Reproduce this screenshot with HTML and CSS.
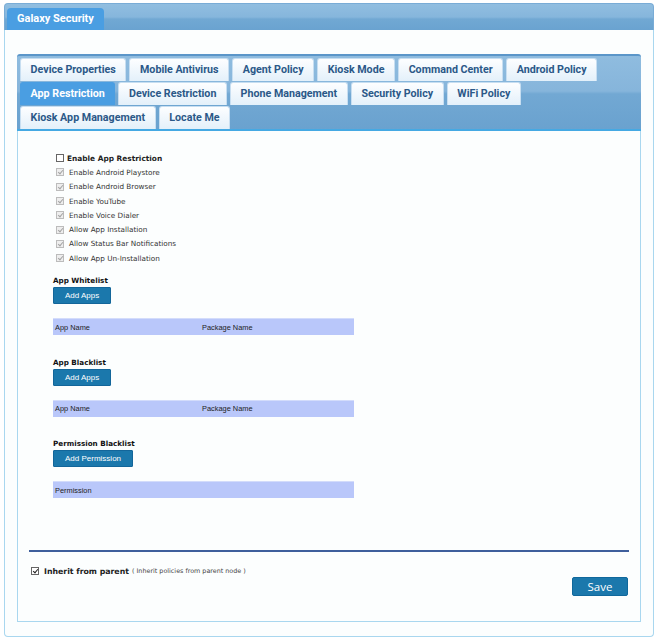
FILE: index.html
```html
<!DOCTYPE html>
<html lang="en">
  <head>
    <meta charset="UTF-8" />
    <meta name="viewport" content="width=device-width, initial-scale=1.0" />
    <link rel="stylesheet" href="styles.css">
    <title>Galaxy Security</title>
  </head>
  <body>
    <div class="window">
      <div class="window-head">
        <div class="window-title">Galaxy Security</div>
      </div>
      <div class="window-body">
        <nav class="tabs">
          <a class="tab">Device Properties</a>
          <a class="tab">Mobile Antivirus</a>
          <a class="tab">Agent Policy</a>
          <a class="tab">Kiosk Mode</a>
          <a class="tab">Command Center</a>
          <a class="tab">Android Policy</a>
          <a class="tab active">App Restriction</a>
          <a class="tab">Device Restriction</a>
          <a class="tab">Phone Management</a>
          <a class="tab">Security Policy</a>
          <a class="tab">WiFi Policy</a>
          <a class="tab">Kiosk App Management</a>
          <a class="tab">Locate Me</a>
        </nav>

        <div class="panel">
          <div class="policy">
            <ul class="options">
              <li class="master">
                <input type="checkbox" class="check" />
                <label>Enable App Restriction</label>
              </li>
              <li><input type="checkbox" class="check" checked disabled /><label>Enable Android Playstore</label></li>
              <li><input type="checkbox" class="check" checked disabled /><label>Enable Android Browser</label></li>
              <li><input type="checkbox" class="check" checked disabled /><label>Enable YouTube</label></li>
              <li><input type="checkbox" class="check" checked disabled /><label>Enable Voice Dialer</label></li>
              <li><input type="checkbox" class="check" checked disabled /><label>Allow App Installation</label></li>
              <li><input type="checkbox" class="check" checked disabled /><label>Allow Status Bar Notifications</label></li>
              <li><input type="checkbox" class="check" checked disabled /><label>Allow App Un-Installation</label></li>
            </ul>

            <section class="list">
              <h3>App Whitelist</h3>
              <button class="btn">Add Apps</button>
              <div class="list-head">
                <span class="col-name">App Name</span>
                <span>Package Name</span>
              </div>
            </section>

            <section class="list">
              <h3>App Blacklist</h3>
              <button class="btn">Add Apps</button>
              <div class="list-head">
                <span class="col-name">App Name</span>
                <span>Package Name</span>
              </div>
            </section>

            <section class="list">
              <h3>Permission Blacklist</h3>
              <button class="btn">Add Permission</button>
              <div class="list-head">
                <span>Permission</span>
              </div>
            </section>
          </div>

          <div class="footer">
            <div class="inherit">
              <input type="checkbox" class="check dark" checked />
              <label>Inherit from parent</label>
              <small>( Inherit policies from parent node )</small>
            </div>
            <div class="actions">
              <button class="btn save">Save</button>
            </div>
          </div>
        </div>
      </div>
    </div>
  </body>
</html>
```

FILE: styles.css
```css
* {
  box-sizing: border-box;
  margin: 0;
  padding: 0;
  --tab-text: #2b5888;
  --tab-active: #4a9ee2;
  --frame: #a9d7ef;
  --btn: #1b78ac;
}

body {
  background-color: #ffffff;
  font-family: 'DejaVu Sans', Verdana, sans-serif;
  color: #222;
}

/* outer window */
.window {
  margin: 3px 4px 0 4px;
  width: 650px;
}

.window-head {
  height: 27px;
  padding: 4px 0 0 2px;
  border: 1px solid #79acd6;
  border-bottom: none;
  border-radius: 4px 4px 0 0;
  background: linear-gradient(#91bee0 0%, #86b6dc 50%, #71a8d3 58%, #6aa3d0 100%);
}

.window-title {
  width: 97px;
  height: 22px;
  padding-left: 10px;
  line-height: 21px;
  border-radius: 4px 4px 0 0;
  background-color: var(--tab-active);
  color: white;
  font-family: Roboto, 'Open Sans', sans-serif;
  font-weight: bold;
  font-size: 11px;
}

.window-body {
  padding: 24px 12px 14px 12px;
  border: 1px solid var(--frame);
  border-top: none;
  border-radius: 0 0 4px 4px;
  background-color: #fcfefe;
}

/* policy tabs */
.tabs {
  display: flex;
  flex-wrap: wrap;
  gap: 1px 3px;
  padding: 2px 3px 0 3px;
  border-top: 2px solid #5b96c9;
  border-bottom: 2px solid #45a9e3;
  border-radius: 3px 3px 0 0;
  background: linear-gradient(#8fbcdf 0%, #86b5db 48%, #72a8d3 52%, #6aa2cf 100%);
}

.tab {
  height: 23px;
  padding: 0 9.6px;
  line-height: 21px;
  border: 1px solid #c7def1;
  border-bottom: none;
  border-radius: 3px 3px 0 0;
  background: linear-gradient(#fdfeff, #e3f0fa);
  color: var(--tab-text);
  font-family: Roboto, 'Open Sans', sans-serif;
  font-weight: bold;
  font-size: 10.7px;
  white-space: nowrap;
  cursor: pointer;
}

.tab.active {
  border-color: var(--tab-active);
  background: var(--tab-active);
  color: white;
}

/* content panel */
.panel {
  padding: 20px 11px 25px 11px;
  border: 1px solid var(--frame);
  border-top: none;
  background-color: #fcfefe;
}

.policy {
  padding-left: 24px;
}

.options {
  list-style: none;
}

.options li {
  display: flex;
  align-items: center;
  gap: 5px;
  height: 14.3px;
  padding-left: 3px;
  font-size: 7.25px;
  color: #333;
}

.options li.master {
  gap: 3px;
  font-weight: bold;
  font-size: 7.4px;
  color: #222;
}

/* small square checkboxes */
.check {
  -webkit-appearance: none;
  appearance: none;
  position: relative;
  flex: none;
  width: 8px;
  height: 8px;
  border: 1px solid #666;
  background-color: white;
}

.check:checked::after {
  content: '';
  position: absolute;
  left: 2px;
  top: 0;
  width: 2px;
  height: 4px;
  border: solid #222;
  border-width: 0 1.5px 1.5px 0;
  transform: rotate(40deg);
}

.check:disabled {
  border-color: #bcbcbc;
  background-color: #eeeeee;
}

.check:disabled::after {
  border-color: #a4a4a4;
}

/* whitelist / blacklist blocks */
.list {
  margin-top: 11px;
}

.list + .list {
  margin-top: 22.5px;
}

.list h3 {
  height: 10px;
  line-height: 10px;
  font-size: 7.2px;
  font-weight: bold;
  color: #111;
}

.btn {
  display: block;
  margin-top: 1px;
  height: 17px;
  padding: 0 11px;
  border: 1px solid #13669a;
  border-radius: 1px;
  background-color: var(--btn);
  color: white;
  font-family: 'Liberation Sans', Arial, sans-serif;
  font-size: 8px;
  cursor: pointer;
}

.list-head {
  display: flex;
  align-items: center;
  width: 301px;
  height: 17px;
  margin-top: 14px;
  padding-left: 2px;
  border-top: 1px solid #d3dcfb;
  background-color: #b9c7fa;
  font-family: 'Liberation Sans', Arial, sans-serif;
  font-size: 7.4px;
  color: #222;
}

.col-name {
  width: 147px;
}

/* inherit + save */
.footer {
  margin-top: 52px;
  border-top: 2px solid #3f5f9c;
  padding: 14px 1px 0 2px;
}

.inherit {
  display: flex;
  align-items: center;
  height: 10px;
  gap: 5px;
}

.inherit label {
  font-weight: bold;
  font-size: 7.8px;
  color: #222;
}

.inherit small {
  margin-left: -2px;
  font-size: 6.4px;
  color: #444;
}

.actions {
  display: flex;
  justify-content: flex-end;
  margin-top: 1px;
}

.btn.save {
  width: 56px;
  height: 19px;
  margin-top: 0;
  padding: 0;
  border-color: #10689c;
  border-radius: 2px;
  font-family: 'Open Sans', sans-serif;
  font-size: 11.5px;
}
```
